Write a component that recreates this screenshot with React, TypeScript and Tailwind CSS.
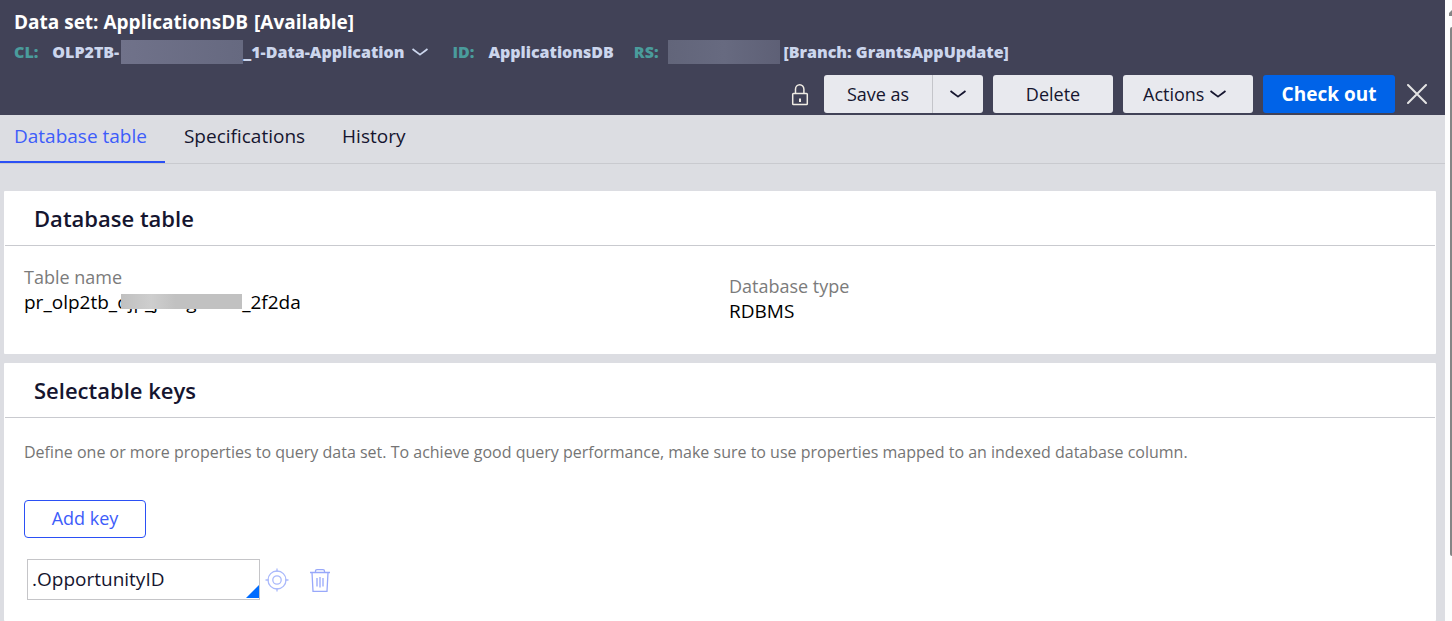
import { useState } from 'react';

const TABS = ['Database table', 'Specifications', 'History'];

function Chevron() {
  return (
    <svg viewBox="0 0 16 10" className="h-[10px] w-4 shrink-0" fill="none" stroke="currentColor" strokeWidth="1.7" aria-hidden="true">
      <path d="M0.5 2C3 4 5.5 5.8 8 7.6C10.5 5.8 13 4 15.5 2" />
    </svg>
  );
}

function LockIcon() {
  return (
    <svg viewBox="0 0 18 24" className="h-6 w-[18px]" fill="none" stroke="#f0ece4" strokeWidth="1.5" role="img" aria-label="Locked">
      <path d="M4.5 11.5V7.2a4.200 4.500 0 0 1 8.400 0v4.300" />
      <rect x="1.7" y="11.5" width="14.6" height="11" rx="0.8" />
      <path d="M9 16.5v3.5" strokeWidth="2" />
    </svg>
  );
}

function TargetIcon() {
  return (
    <svg viewBox="0 0 24 24" className="size-6" fill="none" stroke="#aab9fb" strokeWidth="1.3" aria-hidden="true">
      <circle cx="12" cy="12" r="9" />
      <circle cx="12" cy="12" r="4.2" />
      <path d="M12 0.5v3.5M12 20v3.5M0.5 12H4M20 12h3.5" />
    </svg>
  );
}

function TrashIcon() {
  return (
    <svg viewBox="0 0 20 24" className="h-6 w-5" fill="none" stroke="#98a8fa" strokeWidth="1.3" aria-hidden="true">
      <path d="M0 4.5h20M5.5 4.5V3.2C5.5 2.2 6 1.7 7 1.7h6c1 0 1.5.5 1.5 1.5v1.3" />
      <path d="M2 4.5l1 18.800h14l1-18.800" />
      <path d="M7 10v8.500M10 9v10.500M13 10v8.500" />
    </svg>
  );
}

function Card({ title, className = '', children }: { title: string; className?: string; children: React.ReactNode }) {
  return (
    <section className={`rounded-[1px] bg-white ${className}`}>
      <h2 className="mx-px border-b border-[#c9cacf] px-[29px] pt-[11px] pb-[11px] text-[22px] leading-8 font-semibold text-[#15152f]">{title}</h2>
      {children}
    </section>
  );
}

const grayBtn = 'h-[38px] bg-[#e8e9ee] text-[18px] text-[#15152f] cursor-pointer';

export default function App() {
  const [tab, setTab] = useState(TABS[0]);
  const [keyName, setKeyName] = useState('.OpportunityID');

  return (
    <div className="flex min-h-screen bg-[#fdfdfd] font-['Open_Sans',sans-serif]">
      <div className="flex min-w-0 flex-1 flex-col bg-[#dcdde2]">
        <header className="bg-[#414257] pt-[9px] pb-[2px]">
          <h1 className="flex gap-[6px] px-[14px] text-[19px] leading-[26px] font-bold text-white">
            <span>Data set: ApplicationsDB</span>
            <span>[Available]</span>
          </h1>

          <div className="flex h-[34px] items-center px-[14px] text-[16px] font-extrabold text-[#ccd6ed]">
            <span className="mr-[14px] text-[#4a9c9c]">CL:</span>
            <span>OLP2TB-</span>
            <span className="ml-[2px] h-6 w-[122px] bg-linear-to-r from-[#70728a] to-[#666980]" />
            <span>_1-Data-Application</span>
            <button type="button" aria-label="Choose class" className="ml-2 cursor-pointer">
              <Chevron />
            </button>
            <span className="mr-[14px] ml-6 text-[#4a9c9c]">ID:</span>
            <span>ApplicationsDB</span>
            <span className="mr-[9px] ml-5 text-[#4a9c9c]">RS:</span>
            <span className="mr-1 h-6 w-[112px] bg-linear-to-r from-[#62657a] via-[#676a80] to-[#5e6076]" />
            <span>[Branch: GrantsAppUpdate]</span>
          </div>

          <div className="mt-[6px] flex items-center justify-end gap-[10px] pr-[18px]">
            <LockIcon />
            <div className="ml-[5px] flex">
              <button type="button" className={`${grayBtn} w-[109px] rounded-l-[3px] border-r border-[#c4c5ca]`}>Save as</button>
              <button type="button" aria-label="More save options" className={`${grayBtn} flex w-[50px] items-center justify-center rounded-r-[3px]`}>
                <Chevron />
              </button>
            </div>
            <button type="button" className={`${grayBtn} w-[120px] rounded-[3px]`}>Delete</button>
            <button type="button" className={`${grayBtn} flex w-[130px] items-center gap-[6px] rounded-[3px] pl-5`}>
              Actions
              <Chevron />
            </button>
            <button type="button" className="h-[38px] w-[132px] cursor-pointer rounded-[3px] bg-[#0063e8] text-[19px] font-bold text-white">Check out</button>
            <button type="button" aria-label="Close" className="ml-[2px] cursor-pointer">
              <svg viewBox="0 0 20 20" className="size-5" stroke="#e4e4e4" strokeWidth="2" strokeLinecap="round" aria-hidden="true">
                <path d="M1 1l18 18M19 1L1 19" />
              </svg>
            </button>
          </div>
        </header>

        <nav className="flex h-[49px] border-b border-[#c9cacf]">
          {TABS.map(t => (
            <button
              key={t}
              type="button"
              onClick={() => setTab(t)}
              className={`flex h-12 cursor-pointer border-b-2 pr-[18px] pl-[19px] pt-2 text-[19px] leading-[26px] first:pl-[14px] ${t === tab ? 'border-[#2b50f5] text-[#3d5cfa]' : 'border-transparent text-[#15152f]'}`}
            >
              {t}
            </button>
          ))}
        </nav>

        <main className="flex flex-1 flex-col gap-[9px] pt-[27px] pr-[9px] pl-1">
          <Card title="Database table">
            <dl className="grid grid-cols-[705px_1fr] px-5 pt-[19px] pb-[30px] text-[18px] leading-[25px]">
              <div>
                <dt className="text-[#7b7b7b]">Table name</dt>
                <dd className="flex text-[19px] text-black">
                  pr_olp2tb_
                  <span className="relative flex w-[125px]">
                    <span>ojp_j</span>
                    <span className="ml-7">g</span>
                    <span className="absolute top-[4px] right-0 left-1 h-[15px] bg-linear-to-r from-[#c0c0c0] via-[#cecece] via-25% to-[#c1c1c1] to-45%" />
                  </span>
                  _2f2da
                </dd>
              </div>
              <div className="pt-[9px]">
                <dt className="text-[#7b7b7b]">Database type</dt>
                <dd className="text-[19px] text-black">RDBMS</dd>
              </div>
            </dl>
          </Card>

          <Card title="Selectable keys" className="flex-1">
            <div className="px-5 pt-[22px] pb-[21px]">
              <p className="text-[16px] leading-6 text-[#757575]">
                Define one or more properties to query data set. To achieve good query performance, make sure to use properties mapped to an indexed database column.
              </p>
              <button type="button" className="mt-9 block h-[38px] w-[122px] cursor-pointer rounded-[4px] border border-[#2b50f5] pb-[2px] text-[18px] text-[#3d5cfa]">
                Add key
              </button>
              <div className="mt-[21px] ml-[3px] flex items-center">
                <div className="relative">
                  <input
                    type="text"
                    aria-label="Key property"
                    value={keyName}
                    onChange={e => setKeyName(e.target.value)}
                    className="block h-[41px] w-[233px] border border-[#c5c5c8] px-1 pb-[2px] text-[19px] text-[#15152f] outline-none"
                  />
                  {/* corner marker of the autocomplete */}
                  <svg viewBox="0 0 13 13" className="absolute right-px bottom-[2px] size-[13px]" aria-hidden="true">
                    <path d="M13 0v13H0z" fill="#006cff" />
                  </svg>
                </div>
                <button type="button" aria-label="Open property" className="ml-[5px] cursor-pointer"><TargetIcon /></button>
                <button type="button" aria-label="Delete key" className="ml-[21px] cursor-pointer"><TrashIcon /></button>
              </div>
            </div>
          </Card>
        </main>
      </div>

      {/* scrollbar */}
      <div className="flex w-[7px] shrink-0 flex-col items-end overflow-hidden" aria-hidden="true">
        <svg viewBox="0 0 3 6" className="mt-[10px] h-[6px] w-[3px]">
          <path d="M3 0L0 3v3h3z" fill="#858585" />
        </svg>
        <div className="mt-[11px] h-[529px] w-[2px] rounded-l-[2px] bg-[#858585]" />
      </div>
    </div>
  );
}
